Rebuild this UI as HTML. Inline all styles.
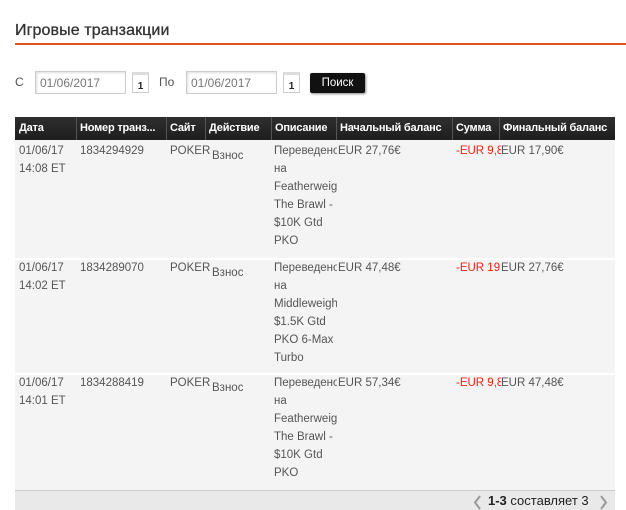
<!DOCTYPE html>
<html><head><meta charset="utf-8"><style>
*{margin:0;padding:0;box-sizing:border-box}
body{width:626px;height:510px;background:#fff;font-family:"Liberation Sans",sans-serif;color:#555;position:relative;overflow:hidden;font-size:11.5px}
.a{position:absolute}
h1{position:absolute;left:15px;top:22px;font-size:16px;font-weight:normal;color:#333;letter-spacing:0.1px;-webkit-text-stroke:0.3px #333}
.line{left:15px;top:43px;width:611px;height:2px;background:#e0521c}
.inp{border:1px solid #ccc;height:23px;top:71px;width:91px;color:#777;font-size:12px;padding:4px 0 0 4px;box-shadow:inset 1px 1px 2px #ddd}
.cal{top:72px;width:17px;height:21px;border:1px solid #ccc;font-size:10px;font-weight:bold;color:#222;text-align:center;padding-top:6px;border-top:3px solid #ddd}
.btn{left:310px;top:73px;width:55px;height:20px;background:#111;border-radius:2px;color:#fff;font-size:11.5px;text-align:center;line-height:20px;box-shadow:1px 1px 2px #888}
.hdr{left:15px;top:117px;width:600px;height:23px;background:linear-gradient(#2f2f2f,#1e1e1e)}
.th{position:absolute;top:117px;height:23px;line-height:23px;color:#fff;font-weight:bold;font-size:11px;padding-left:3px;border-left:1px solid #555;white-space:nowrap;overflow:hidden;letter-spacing:-0.2px}
.row{left:15px;width:600px;background:#f4f4f4}
.c{position:absolute;line-height:18px;white-space:nowrap;overflow:hidden;font-size:11.5px;color:#555}
.r{color:#e21}
.foot{left:15px;top:490px;width:600px;height:20px;background:#e9e9e9;border-top:1px solid #ccc}
</style></head><body>
<h1>Игровые транзакции</h1>
<div class="a line"></div>
<div class="a" style="left:15px;top:75px;font-size:12px">С</div>
<div class="a inp" style="left:35px">01/06/2017</div>
<div class="a cal" style="left:132px">1</div>
<div class="a" style="left:159px;top:75px;font-size:12px">По</div>
<div class="a inp" style="left:186px">01/06/2017</div>
<div class="a cal" style="left:283px">1</div>
<div class="a btn">Поиск</div>
<div class="a hdr"></div>
<div class="th" style="left:15px;width:61px;border-left:none;padding-left:4px">Дата</div>
<div class="th" style="left:76px;width:90px">Номер транз...</div>
<div class="th" style="left:166px;width:39px">Сайт</div>
<div class="th" style="left:205px;width:66px">Действие</div>
<div class="th" style="left:271px;width:65px">Описание</div>
<div class="th" style="left:336px;width:116px">Начальный баланс</div>
<div class="th" style="left:452px;width:47px">Сумма</div>
<div class="th" style="left:499px;width:116px">Финальный баланс</div>

<div class="a row" style="top:140px;height:118px"></div>
<div class="a row" style="top:260px;height:113px"></div>
<div class="a row" style="top:375px;height:115px"></div>

<div class="c" style="left:19px;top:142px">01/06/17<br>14:08 ET</div>
<div class="c" style="left:80px;top:142px">1834294929</div>
<div class="c" style="left:170px;top:142px">POKER</div>
<div class="c" style="left:212px;top:147px">Взнос</div>
<div class="c" style="left:274px;top:142px;width:63px">Переведено<br>на<br>Featherweight<br>The Brawl -<br>$10K Gtd<br>PKO</div>
<div class="c" style="left:338px;top:142px">EUR 27,76€</div>
<div class="c r" style="left:456px;top:142px;width:45px">-EUR 9,80€</div>
<div class="c" style="left:501px;top:142px">EUR 17,90€</div>

<div class="c" style="left:19px;top:259px">01/06/17<br>14:02 ET</div>
<div class="c" style="left:80px;top:259px">1834289070</div>
<div class="c" style="left:170px;top:259px">POKER</div>
<div class="c" style="left:212px;top:264px">Взнос</div>
<div class="c" style="left:274px;top:259px;width:63px">Переведено<br>на<br>Middleweight<br>$1.5K Gtd<br>PKO 6-Max<br>Turbo</div>
<div class="c" style="left:338px;top:259px">EUR 47,48€</div>
<div class="c r" style="left:456px;top:259px;width:45px">-EUR 19,72€</div>
<div class="c" style="left:501px;top:259px">EUR 27,76€</div>

<div class="c" style="left:19px;top:374px">01/06/17<br>14:01 ET</div>
<div class="c" style="left:80px;top:374px">1834288419</div>
<div class="c" style="left:170px;top:374px">POKER</div>
<div class="c" style="left:212px;top:379px">Взнос</div>
<div class="c" style="left:274px;top:374px;width:63px">Переведено<br>на<br>Featherweight<br>The Brawl -<br>$10K Gtd<br>PKO</div>
<div class="c" style="left:338px;top:374px">EUR 57,34€</div>
<div class="c r" style="left:456px;top:374px;width:45px">-EUR 9,80€</div>
<div class="c" style="left:501px;top:374px">EUR 47,48€</div>

<div class="a foot"></div>
<svg class="a" style="left:473px;top:495px" width="10" height="15"><path d="M7 1 L2 7.5 L7 14" stroke="#999" stroke-width="2" fill="none"/></svg>
<div class="a" style="left:488px;top:493px;font-size:13px;color:#222"><b>1-3</b> составляет 3</div>
<svg class="a" style="left:599px;top:495px" width="10" height="15"><path d="M2 1 L7 7.5 L2 14" stroke="#999" stroke-width="2" fill="none"/></svg>
</body></html>
